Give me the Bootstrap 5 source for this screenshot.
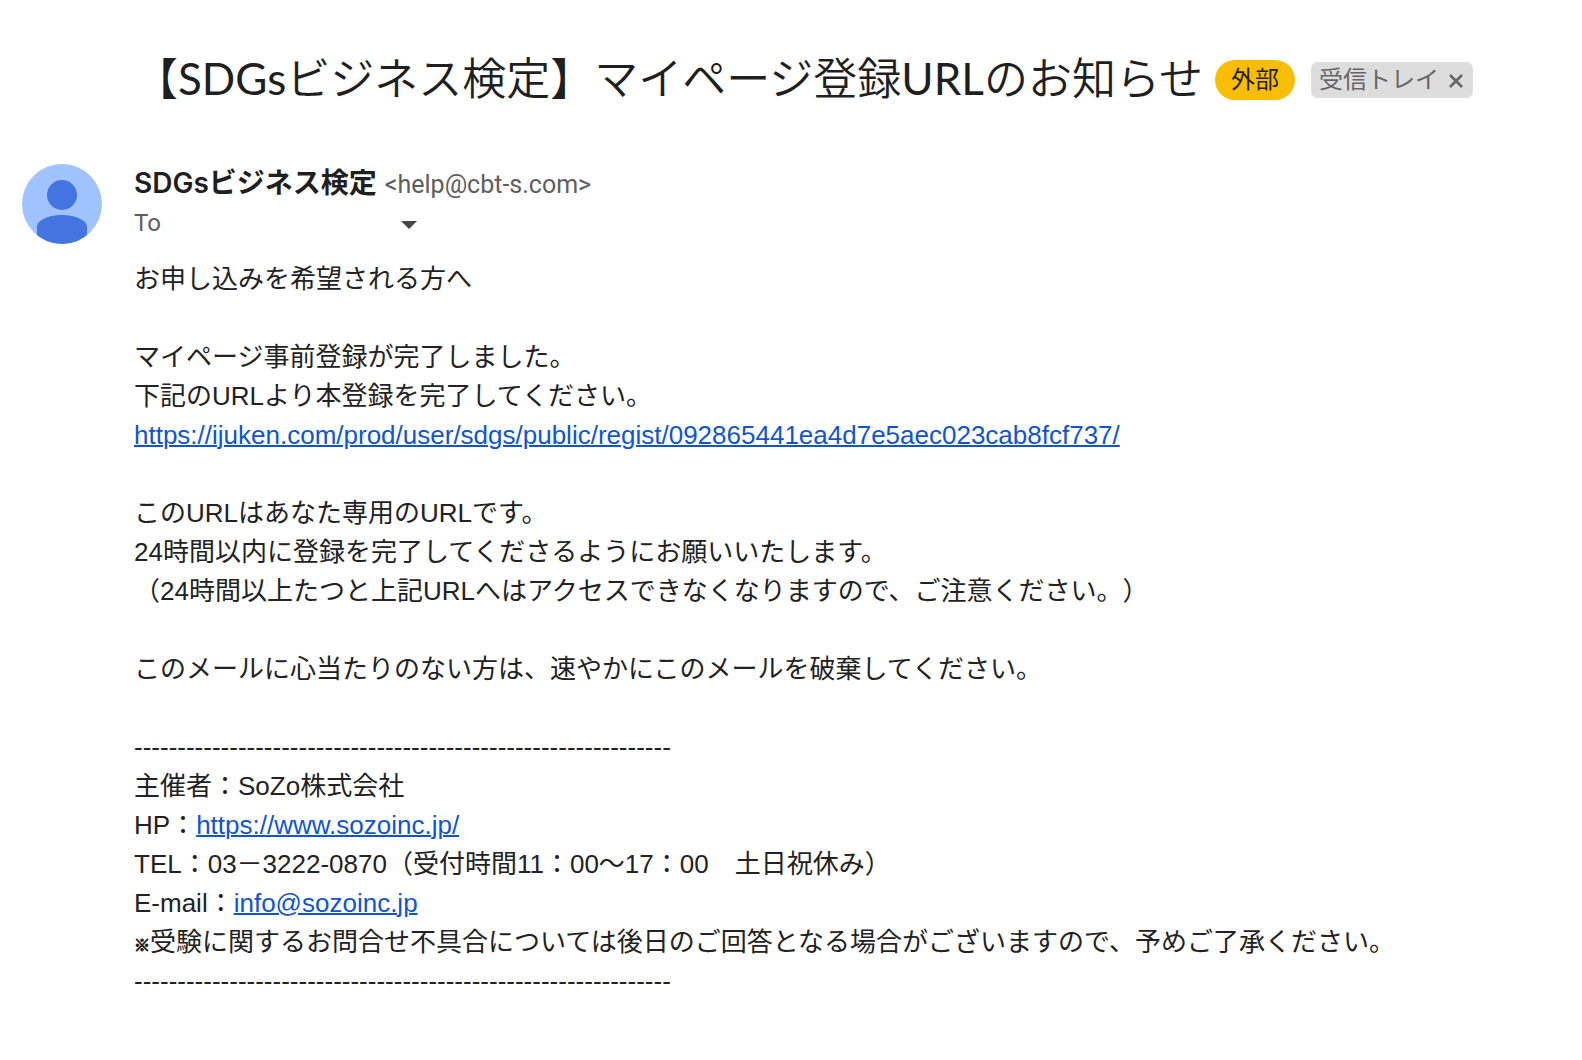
<!DOCTYPE html>
<html lang="ja">
<head>
<meta charset="utf-8">
<meta name="viewport" content="width=device-width, initial-scale=1">
<title>【SDGsビジネス検定】マイページ登録URLのお知らせ</title>
<link href="https://cdn.jsdelivr.net/npm/bootstrap@5.3.0/dist/css/bootstrap.min.css" rel="stylesheet">
<style>
  body { background: #fff; color: #1f1f1f; font-family: Roboto, "Noto Sans CJK JP", sans-serif; }
  .mail-page { padding: 48px 22px 56px; }
  .mail-head { padding-left: 112px; min-height: 64px; column-gap: 12px; }
  .mail-subject { font-family: Lato, "Noto Sans CJK JP DemiLight", "Noto Sans CJK JP", sans-serif; font-size: 44px; line-height: 60px; padding-bottom: 4px; font-weight: 400; }
  .tag-external { background: #fabd05; color: #1f1f1f; font-size: 24px; line-height: 40px; padding: 0 16px; }
  .tag-inbox { background: #ddd; color: #666; font-size: 24px; line-height: 36px; padding: 0 8px; border-radius: 7px; }
  .tag-close { color: #666; line-height: 0; }
  .mail-row { gap: 32px; margin-top: 52px; }
  .mail-sender { font-family: Inter, "Noto Sans CJK JP", sans-serif; font-size: 28px; line-height: 39px; font-weight: 600; }
  .mail-address { font-size: 25px; line-height: 39px; color: #5e5e5e; }
  .mail-meta { font-size: 24px; line-height: 39px; color: #5e5e5e; }
  .recipient { width: 236px; }
  .mail-text { font-family: "Liberation Sans", "Noto Sans CJK JP", sans-serif; font-size: 26px; line-height: 39px; color: #222; margin-top: 17px; text-spacing-trim: space-all; }
  .mail-text p { margin-bottom: 39px; }
  .mail-text a { color: #15c; text-decoration-thickness: 2px; }
  .note-mark { font-size: 16px; line-height: 16px; -webkit-text-stroke: 1px currentColor; }
</style>
</head>
<body>
<main class="mail-page">
  <header class="mail-head d-flex flex-wrap align-items-center">
    <h1 class="mail-subject mb-0">【SDGsビジネス検定】マイページ登録URLのお知らせ</h1>
    <div class="d-flex align-items-center gap-3">
      <span class="tag-external rounded-pill">外部</span>
      <span class="tag-inbox d-flex align-items-center">受信トレイ
        <button type="button" class="tag-close btn p-0 border-0 ms-2" aria-label="受信トレイのラベルを削除">
          <svg width="18" height="18" viewBox="0 0 18 18" fill="none" stroke="currentColor" stroke-width="2.6" aria-hidden="true"><path d="M3 4l12 12M15 4L3 16"/></svg>
        </button>
      </span>
    </div>
  </header>

  <article class="mail-row d-flex align-items-start">
    <svg class="flex-shrink-0" width="80" height="80" viewBox="0 0 80 80" aria-hidden="true">
      <defs><clipPath id="face"><circle cx="40" cy="40" r="40"/></clipPath></defs>
      <g clip-path="url(#face)">
        <path fill="#a0c2ff" d="M0 0h80v80H0z"/>
        <circle cx="40" cy="31" r="15" fill="#4374e0"/>
        <path fill="#4374e0" d="M15 80V63c0-7 12-12 25-12s25 5 25 12v17z"/>
      </g>
    </svg>
    <div class="flex-grow-1">
      <div class="d-flex flex-wrap align-items-baseline gap-2">
        <span class="mail-sender">SDGsビジネス検定</span>
        <span class="mail-address">&lt;help@cbt-s.com&gt;</span>
      </div>
      <div class="mail-meta d-flex align-items-center">
        <span>To</span>
        <span class="recipient"></span>
        <button type="button" class="btn p-0 border-0 lh-1 d-flex" aria-label="詳細を表示">
          <svg width="24" height="24" viewBox="0 0 24 24" aria-hidden="true"><path fill="#444746" d="M4 9h16l-8 8z"/></svg>
        </button>
      </div>
      <div class="mail-text">
        <p>お申し込みを希望される方へ</p>
        <p>マイページ事前登録が完了しました。<br>下記のURLより本登録を完了してください。<br><a href="https://ijuken.com/prod/user/sdgs/public/regist/092865441ea4d7e5aec023cab8fcf737/">https://ijuken.com/prod/user/sdgs/public/regist/092865441ea4d7e5aec023cab8fcf737/</a></p>
        <p>このURLはあなた専用のURLです。<br>24時間以内に登録を完了してくださるようにお願いいたします。<br>（24時間以上たつと上記URLへはアクセスできなくなりますので、ご注意ください。）</p>
        <p>このメールに心当たりのない方は、速やかにこのメールを破棄してください。</p>
        <div>--------------------------------------------------------------</div>
        <div>主催者：SoZo株式会社</div>
        <div>HP：<a href="https://www.sozoinc.jp/">https://www.sozoinc.jp/</a></div>
        <div>TEL：03－3222-0870（受付時間11：00〜17：00　土日祝休み）</div>
        <div>E-mail：<a href="mailto:info@sozoinc.jp">info@sozoinc.jp</a></div>
        <div><span class="note-mark">※</span>受験に関するお問合せ不具合については後日のご回答となる場合がございますので、予めご了承ください。</div>
        <div>--------------------------------------------------------------</div>
      </div>
    </div>
  </article>
</main>
<script src="https://cdn.jsdelivr.net/npm/bootstrap@5.3.0/dist/js/bootstrap.bundle.min.js"></script>
</body>
</html>
